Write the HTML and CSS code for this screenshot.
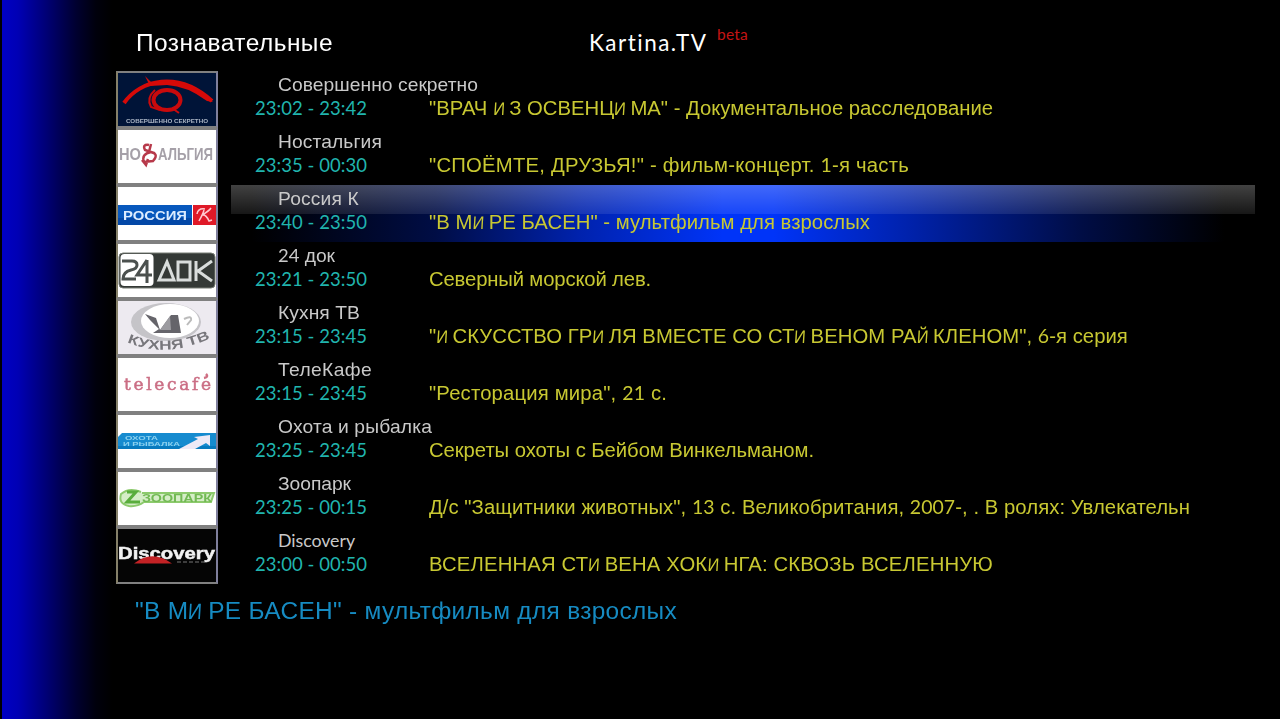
FILE: index.html
```html
<!DOCTYPE html>
<html lang="ru">
<head>
<meta charset="utf-8">
<title>Kartina.TV</title>
<link rel="stylesheet" href="styles.css">
</head>
<body>
<main class="screen">
  <header class="header">
    <h1 class="category"><span data-width="197">Познавательные</span></h1>
    <div class="brand"><span data-width="119">Kartina.TV</span></div>
    <div class="beta"><span data-width="31">beta</span></div>
  </header>
  <section class="guide">
    <div class="logos">
      <svg class="logo" viewBox="0 0 98 53"><rect width="98" height="53" fill="#001438"/><g class="soft"><path d="M6 30C22 7 60-3 94 28" fill="none" stroke="#d60a08" stroke-width="4"/><path d="M27 3l6 6 18-1q22 1 44 21l-6-1q-20-15-40-16l-17 1z" fill="#d60a08"/><ellipse cx="49" cy="27" rx="13.5" ry="10" fill="none" stroke="#c90a0c" stroke-width="4"/><path d="M37 17q-9 8-4 17l9 3M54 35l7 5" fill="none" stroke="#c90a0c" stroke-width="2"/><text x="8" y="49.5" class="mini" fill="#a9b4c4" textLength="82" lengthAdjust="spacingAndGlyphs">СОВЕРШЕННО СЕКРЕТНО</text></g></svg>
      <svg class="logo" viewBox="0 0 98 53"><rect width="98" height="53" fill="#fff"/><g class="soft"><text x="1" y="30" class="bold" font-size="17" fill="#a5a0a8" textLength="22" lengthAdjust="spacingAndGlyphs">НО</text><text x="40" y="30" class="bold" font-size="17" fill="#a5a0a8" textLength="55" lengthAdjust="spacingAndGlyphs">АЛЬГИЯ</text><path d="M31 15q-7-1-4 5l6 2q-10 2-7 10l9-1q7-8-4-9l2-8M24 30l4 5 2-6" fill="none" stroke="#b7394a" stroke-width="2.5"/></g></svg>
      <svg class="logo" viewBox="0 0 98 53"><rect width="98" height="53" fill="#fff"/><rect y="18" width="74" height="20" fill="#0758bd"/><rect y="31" width="74" height="7" fill="#0348a7"/><rect x="75" y="18" width="23" height="20" fill="#df1928"/><g class="soft"><text x="5" y="32.5" class="bold" font-size="13" fill="#dcecff" textLength="64" lengthAdjust="spacingAndGlyphs">РОССИЯ</text><path d="M81 34q4-7 5-11M79 27q1-6 8-5M93 21q-2 3-9 7 4-1 7 6l3-1" fill="none" stroke="#ffc9cf" stroke-width="1.5"/></g></svg>
      <svg class="logo" viewBox="0 0 98 53"><rect width="98" height="53" fill="#fff"/><g class="soft"><rect x="1" y="9" width="96" height="35" rx="4" fill="#343936" stroke="#777c75"/><rect x="2.5" y="10" width="33" height="32" rx="4" fill="#fff"/><path d="M4 17h10q5 0 5 4 0 4-6 5-8 2-8 9h13M29 16L19 31h15M29 16v23" fill="none" stroke="#4b504e" stroke-width="3"/><path d="M41 36l8-18 7 18zM60 18h12v18H60zM78 17v20M94 17L80 27l14 10" fill="none" stroke="#d9dddc" stroke-width="3"/></g></svg>
      <svg class="logo" viewBox="0 0 98 53"><rect width="98" height="53" fill="#edeaf0"/><g class="soft"><ellipse cx="48" cy="21" rx="35" ry="19" fill="#c5c4c8"/><ellipse cx="52" cy="20" rx="29" ry="17" fill="#fff"/><path d="M27 13l11 4 4 12 11-15h7l3 18H35l6-4-9-9z" fill="#65646a"/><path d="M42 29l10-14 1 14z" fill="#9c9ba0"/><path d="M66 18q8-4 7 1l-4 5" fill="none" stroke="#bbb" stroke-width="2"/><path id="kitchen-arc" d="M9 41Q48 58 93 37" fill="none"/><text class="bold" font-size="13" fill="#77767b"><textPath href="#kitchen-arc" textLength="86" lengthAdjust="spacingAndGlyphs">КУХНЯ ТВ</textPath></text></g></svg>
      <svg class="logo" viewBox="0 0 98 53"><rect width="98" height="53" fill="#fff"/><g class="soft"><text x="6" y="32" class="serif" font-size="17" fill="#cb6f85" stroke="#cb6f85" stroke-width=".5" textLength="87">telecafe</text><path d="M86 20q5-1 2-4" fill="none" stroke="#cf6f83" stroke-width="2.5"/></g></svg>
      <svg class="logo" viewBox="0 0 98 53"><rect width="98" height="53" fill="#fff"/><path d="M4 18h94v16H0V22z" fill="#168bcf"/><path d="M0 31h98v3H0z" fill="#087abe"/><g class="soft"><text x="7" y="25" class="mini" fill="#8bd1ef" textLength="33" lengthAdjust="spacingAndGlyphs">ОХОТА</text><text x="5" y="31" class="mini" fill="#8bd1ef" textLength="57" lengthAdjust="spacingAndGlyphs">И РЫБАЛКА</text><path d="M61 34l19-10-4-2 16-2v11l-4-3-11 6z" fill="#eeeaf6"/></g></svg>
      <svg class="logo" viewBox="0 0 98 53"><rect width="98" height="53" fill="#fff"/><g class="soft"><path d="M23 20q-12-5-20 2-3 10 8 12 8 1 15-4h67l3-9H24" fill="#d5edc7" stroke="#8dca6d" stroke-width="2"/><path d="M9 20h9L9 30h13" fill="none" stroke="#59ad3c" stroke-width="3"/><text x="24" y="29.5" class="bold" font-size="11" fill="#72b954" textLength="70" lengthAdjust="spacingAndGlyphs">ЗООПАРК</text></g></svg>
      <svg class="logo" viewBox="0 0 98 53"><rect width="98" height="53" fill="#050505"/><g class="soft"><text x="0" y="29.5" class="discovery" fill="#f2f2f2" stroke="#f2f2f2" stroke-width=".5" textLength="97" lengthAdjust="spacingAndGlyphs">Discovery</text><path d="M16 34.5Q34 20 54 34.5z" fill="#c32225"/><path d="M59 33h28" stroke="#777" stroke-width="1" stroke-dasharray="4 2"/></g></svg>
    </div>
    <div class="programs" id="programs"></div>
  </section>
  <footer class="description"><span data-width="542">"В МИРЕ БАСЕН" - мультфильм для взрослых</span></footer>
</main>
<script src="guide.js"></script>
</body>
</html>
```

FILE: styles.css
```css
* { box-sizing: border-box; }
body { margin: 0; background: #000; font-family: "Liberation Sans", sans-serif; }
.screen {
  width: 1280px; height: 719px; overflow: hidden; padding-left: 116px;
  background: linear-gradient(90deg, #000 2px, #0000c4 2px, #0000b4 18px, #000078 45px, #000030 76px, #00000c 96px, #000 112px);
}
.header { height: 71px; display: grid; grid-template-columns: 453px 128px 1fr; padding-left: 20px; color: #fff; white-space: nowrap; }
.category { margin: 0; padding-top: 29px; font-size: 23.5px; line-height: 28px; font-weight: 400; }
.brand { padding-top: 29px; font: 22.5px/28px Lato, sans-serif; }
.beta { padding-top: 24px; font: 15.5px/20px Lato, sans-serif; color: #c41414; }
.guide { display: grid; grid-template-columns: 102px 1024px; column-gap: 13px; height: 513px; }
.logos { display: flex; flex-direction: column; }
.logo { display: block; width: 102px; height: 57px; border: 2px solid #808080; border-left-color: #858068; border-right-color: #7f7f9c; }
.bold { font-family: "Liberation Sans", sans-serif; font-weight: 700; }
.discovery { font: 700 17px "Liberation Sans", sans-serif; }
.serif { font-family: "DejaVu Serif", serif; }
.mini { font: 700 5px "Liberation Sans", sans-serif; }
.soft { filter: blur(.45px); }
[data-width] { display: inline-block; transform-origin: left center; }
.program { height: 57px; white-space: nowrap; }
.name { height: 29px; padding-left: 47px; font-size: 18.5px; line-height: 27px; color: #c9c9c9; }
.details { height: 28px; display: grid; grid-template-columns: 174px 1fr; padding-left: 24px; line-height: 18px; }
.time { font: 18.5px/17px Lato, sans-serif; color: #20b5ae; }
.title { height: 19px; font-size: 19.5px; line-height: 17px; color: #c8c832; }
.latin { font: 400 .96em/0 Lato, sans-serif; }
.small-cap { display: inline-block; width: .8em; line-height: 0; }
.small-cap i { display: inline-block; font-size: .94em; font-style: normal; line-height: 0; transform: scaleX(.85) skewX(-4deg); transform-origin: left center; }
.selected { background: linear-gradient(90deg, #000 2%, #000d45 20%, #0022ad 34%, #0034f8 48%, #0034f8 53%, #0022ad 66%, #000d45 83%, #000 97%); }
.selected .name { background: linear-gradient(rgba(255,255,255,.26), rgba(255,255,255,.09)); }
.description { padding: 13px 0 0 19px; font-size: 23.5px; line-height: 28px; color: #168bc2; white-space: nowrap; }
```

FILE: guide.js
```js
const programs = [
  ["Совершенно секретно", 200, "23:02 - 23:42", "\"ВРАЧ ИЗ ОСВЕНЦИМА\" - Документальное расследование", 564],
  ["Ностальгия", 104, "23:35 - 00:30", "\"СПОЁМТЕ, ДРУЗЬЯ!\" - фильм-концерт. 1-я часть", 480],
  ["Россия К", 81, "23:40 - 23:50", "\"В МИРЕ БАСЕН\" - мультфильм для взрослых", 441],
  ["24 док", 57, "23:21 - 23:50", "Северный морской лев.", 222],
  ["Кухня ТВ", 82, "23:15 - 23:45", "\"ИСКУССТВО ГРИЛЯ ВМЕСТЕ СО СТИВЕНОМ РАЙКЛЕНОМ\", 6-я серия", 699],
  ["ТелеКафе", 94, "23:15 - 23:45", "\"Ресторация мира\", 21 с.", 238],
  ["Охота и рыбалка", 154, "23:25 - 23:45", "Секреты охоты с Бейбом Винкельманом.", 385],
  ["Зоопарк", 73, "23:25 - 00:15", "Д/с \"Защитники животных\", 13 с. Великобритания, 2007-, . В ролях: Увлекательн", 761],
  ["Discovery", 77, "23:00 - 00:50", "ВСЕЛЕННАЯ СТИВЕНА ХОКИНГА: СКВОЗЬ ВСЕЛЕННУЮ", 564]
];

const markup = text => text
  .replace(/[A-Za-z0-9]+/g, "<b class=\"latin\">$&</b>")
  .replace(/[ИЙ]/g, "<span class=\"small-cap\"><i>$&</i></span>");

document.getElementById("programs").innerHTML = programs.map(([name, nameWidth, time, title, width], index) => `
  <article class="program${index === 2 ? " selected" : ""}">
    <div class="name"><span data-width="${nameWidth}">${markup(name)}</span></div>
    <div class="details">
      <div class="time"><span data-width="112">${time}</span></div>
      <div class="title"><span data-width="${width}">${markup(title)}</span></div>
    </div>
  </article>`).join("");

const description = document.querySelector(".description span");
description.innerHTML = markup(description.textContent);

document.querySelectorAll("[data-width]").forEach(line => {
  const stretch = /[А-я]/.test(line.textContent) ? 1.04 : 1;
  const natural = line.getBoundingClientRect().width;
  const spacing = (line.dataset.width / stretch - natural) / line.textContent.length;
  line.style.letterSpacing = spacing + "px";
  line.querySelectorAll(".small-cap").forEach(cap => { cap.style.marginRight = spacing + "px"; });
  line.style.transform = `scaleX(${stretch})`;
});
```
